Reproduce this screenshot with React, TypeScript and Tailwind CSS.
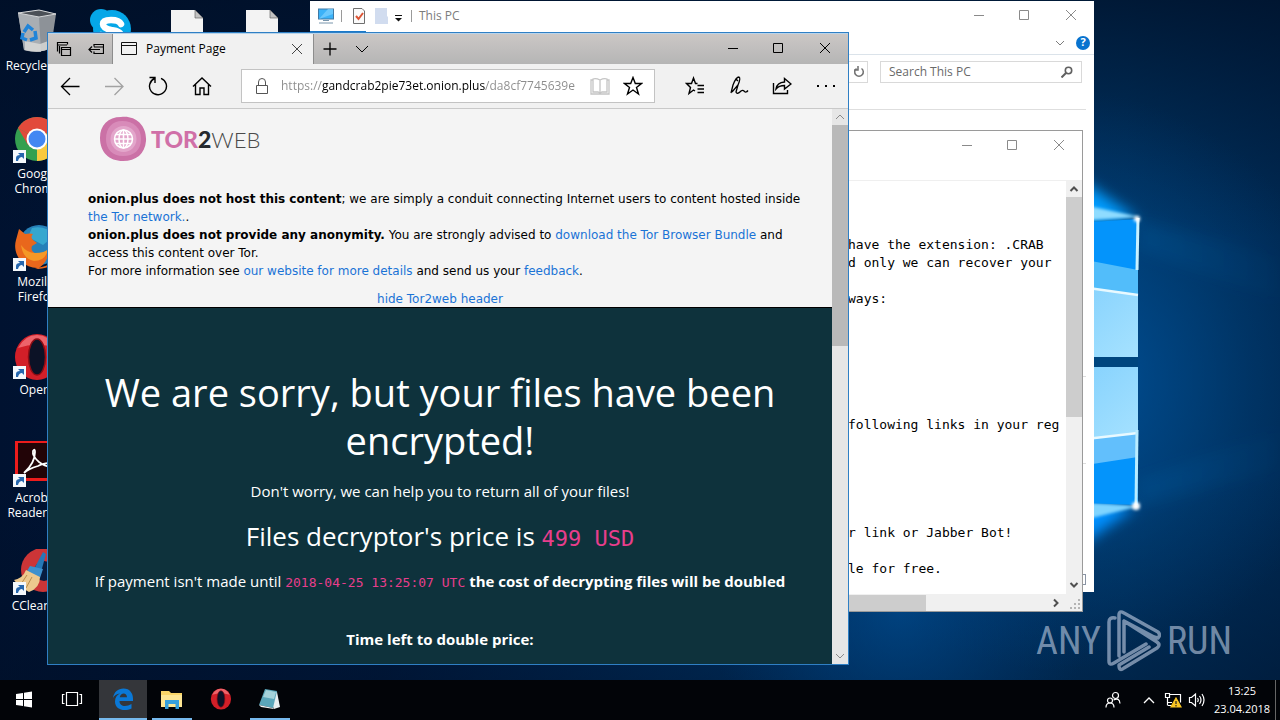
import type { ReactNode } from "react";

const NOTE = [
  "",
  "",
  "",
  "have the extension: .CRAB",
  "d only we can recover your",
  "",
  "ways:",
  "",
  "",
  "",
  "",
  "",
  "",
  "following links in your reg",
  "",
  "",
  "",
  "",
  "",
  "r link or Jabber Bot!",
  "",
  "le for free.",
].join("\n");

function Wallpaper() {
  return (
    <svg className="absolute inset-0 h-full w-full" viewBox="0 0 1280 680" preserveAspectRatio="xMaxYMid slice" aria-hidden="true">
      <defs>
        <linearGradient id="wbase" x1="0" y1="0" x2="1" y2="0">
          <stop offset="0" stopColor="#001230" />
          <stop offset="0.3" stopColor="#001a40" />
          <stop offset="0.65" stopColor="#003c74" />
          <stop offset="0.88" stopColor="#003768" />
          <stop offset="1" stopColor="#002a54" />
        </linearGradient>
        <radialGradient id="wglow" gradientUnits="userSpaceOnUse" cx="1060" cy="380" r="290">
          <stop offset="0" stopColor="#0058a6" />
          <stop offset="0.3" stopColor="#004c90" stopOpacity="0.7" />
          <stop offset="0.65" stopColor="#004684" stopOpacity="0.3" />
          <stop offset="1" stopColor="#004080" stopOpacity="0" />
        </radialGradient>
        <radialGradient id="wfloor" gradientUnits="userSpaceOnUse" cx="900" cy="610" r="190">
          <stop offset="0" stopColor="#005098" stopOpacity="0.6" />
          <stop offset="1" stopColor="#004080" stopOpacity="0" />
        </radialGradient>
        <linearGradient id="wtop" x1="0" y1="0" x2="0" y2="1">
          <stop offset="0" stopColor="#000f26" stopOpacity="0.75" />
          <stop offset="0.35" stopColor="#000f26" stopOpacity="0" />
          <stop offset="0.7" stopColor="#000f26" stopOpacity="0" />
          <stop offset="1" stopColor="#000f26" stopOpacity="0.45" />
        </linearGradient>
        <linearGradient id="wpane" x1="0" y1="0" x2="1" y2="1">
          <stop offset="0" stopColor="#80cffd" />
          <stop offset="1" stopColor="#a6e2ff" />
        </linearGradient>
        <linearGradient id="wray" gradientUnits="userSpaceOnUse" x1="1138" y1="0" x2="1280" y2="0">
          <stop offset="0" stopColor="#1477c8" stopOpacity="0.16" />
          <stop offset="1" stopColor="#1477c8" stopOpacity="0.02" />
        </linearGradient>
        <filter id="wsoft" x="-50%" y="-50%" width="200%" height="200%">
          <feGaussianBlur stdDeviation="7" />
        </filter>
        <filter id="wfine" x="-50%" y="-50%" width="200%" height="200%">
          <feGaussianBlur stdDeviation="1.5" />
        </filter>
      </defs>
      <rect width="1280" height="680" fill="url(#wbase)" />
      <rect width="1280" height="680" fill="url(#wtop)" />
      <rect width="1280" height="680" fill="url(#wglow)" />
      <rect width="1280" height="680" fill="url(#wfloor)" />
      <path d="M1138 219L1280 258V300L1138 250Z" fill="url(#wray)" filter="url(#wsoft)" />
      <path d="M1138 506L1280 470V430L1138 480Z" fill="url(#wray)" filter="url(#wsoft)" />
      <path d="M1060 165L1138 219L1060 230Z" fill="#009cff" filter="url(#wsoft)" />
      <path d="M1060 495L1136 507L1060 560Z" fill="#0090ff" filter="url(#wsoft)" />
      <path d="M1060 200L1140 217L1060 222Z" fill="#8fdcff" filter="url(#wfine)" />
      <path d="M1060 501L1140 506L1060 526Z" fill="#7fd4ff" filter="url(#wfine)" />
      <path d="M1060 224L1138 219V357H1060Z" fill="#0494fb" />
      <path d="M1060 255L1138 270V357H1060Z" fill="#52bdfa" />
      <path d="M1060 284L1138 295V357H1060Z" fill="url(#wpane)" />
      <path d="M1060 284L1138 295" stroke="#e8f9ff" strokeWidth="2.5" />
      <path d="M1138 218L1137 270" stroke="#c9f1ff" strokeWidth="3" />
      <path d="M1060 367H1138V505L1060 502Z" fill="#0494fb" />
      <path d="M1060 367H1138V457L1060 469Z" fill="#62bffc" />
      <path d="M1060 367H1138V433L1060 441Z" fill="url(#wpane)" />
      <path d="M1060 442L1138 433" stroke="#e8f9ff" strokeWidth="2.5" />
      <path d="M1137 430L1136 505" stroke="#b9ecff" strokeWidth="3" />
      <rect x="1060" y="357" width="78" height="10" fill="#00467f" />
      <circle cx="1137" cy="219" r="3" fill="#fff" filter="url(#wfine)" />
      <circle cx="1136" cy="506" r="4" fill="#fff" filter="url(#wfine)" />
    </svg>
  );
}

function Shortcut() {
  return (
    <g>
      <rect x="0" y="33" width="13" height="13" fill="#f4f8fc" />
      <path d="M3 44V41Q3 38 7 38L5 36H11V42L9 40Q6 40 5 44Z" fill="#2566ad" />
    </g>
  );
}

function DesktopItem({ label, children }: { label: string; children: ReactNode }) {
  return (
    <a href="#" className="flex h-[108px] w-[74px] flex-col items-center text-center text-[12px] leading-[15px] text-white">
      <svg className="h-12 w-12 shrink-0" viewBox="0 0 48 48" aria-hidden="true">
        {children}
      </svg>
      <span className="mt-px w-full">{label}</span>
    </a>
  );
}

function OperaShape() {
  return (
    <g>
      <ellipse cx="24" cy="24" rx="22" ry="23" fill="#d21f28" />
      <path d="M5 15Q12 2 24 2Q36 2 43 15Q24 8 5 15Z" fill="#f4747a" opacity="0.8" />
      <ellipse cx="24" cy="24" rx="8.5" ry="18" fill="#0c1226" stroke="#8e0d14" strokeWidth="1.5" />
    </g>
  );
}

function DesktopIcons() {
  return (
    <div className="absolute top-[9px] left-0 flex">
      <div className="flex flex-col">
        <DesktopItem label="Recycle Bin">
          <path d="M5 4L26 1L43 5L38 39Q28 45 11 41Z" fill="#8d9298" />
          <path d="M5 4L26 8L28 43Q18 43 11 41Z" fill="#a9aeb3" />
          <path d="M5 4L26 1L43 5L26 8Z" fill="#4b5057" stroke="#d4d6d8" />
          <path d="M12 32L27 35L38 31L37 39Q28 45 12 41Z" fill="#dcdcda" opacity="0.8" />
          <path d="M11 23L15 17L20 21M22 22L23 29L17 31M14 31L9 29L10 24" fill="none" stroke="#2084d8" strokeWidth="3.5" />
        </DesktopItem>
        <DesktopItem label="Google Chrome">
          <circle cx="24" cy="22" r="22" fill="#34a050" />
          <path d="M24 22L5 11A22 22 0 0 1 43 11Z" fill="#e24a3b" />
          <path d="M24 22L43 11A22 22 0 0 1 24 44Z" fill="#f9ca3e" />
          <path d="M5 11L15 28L24 22Z" fill="#e24a3b" />
          <circle cx="24" cy="22" r="10.5" fill="#fff" />
          <circle cx="24" cy="22" r="8.5" fill="#4387f2" />
          <Shortcut />
        </DesktopItem>
        <DesktopItem label="Mozilla Firefox">
          <circle cx="26" cy="20" r="20" fill="#2680b8" />
          <path d="M19 3Q32 0 42 10L30 20L15 12Z" fill="#36a7cf" />
          <path d="M6 4L12 9Q17 8 20 9Q17 12 20 15L24 18L19 21Q17 27 24 29Q32 29 36 23Q36 36 26 43A22 22 0 0 1 3 15Z" fill="#e9671c" />
          <path d="M22 28Q32 28 35 24Q33 36 21 36Q10 34 8 20Q14 28 22 28Z" fill="#f49826" />
          <path d="M22 43Q44 42 46 20Q47 43 25 44Z" fill="#e9671c" />
          <Shortcut />
        </DesktopItem>
        <DesktopItem label="Opera">
          <OperaShape />
          <Shortcut />
        </DesktopItem>
        <DesktopItem label="Acrobat Reader DC">
          <rect x="3.5" y="0.5" width="42" height="38" fill="#220407" stroke="#ed1c1c" strokeWidth="3" />
          <path d="M11 32Q22 22 22 11Q22 7 20 10Q19 15 26 21Q36 28 39 24Q36 20 25 25Q15 28 11 32Z" fill="none" stroke="#fff" strokeWidth="1.8" />
          <Shortcut />
        </DesktopItem>
        <DesktopItem label="CCleaner">
          <circle cx="30" cy="21" r="22" fill="#cc3537" />
          <circle cx="31" cy="22" r="10" fill="#081c40" />
          <path d="M30 3L33 5L28 23L21 20Z" fill="#2678b8" />
          <path d="M17 17L30 20L27 29L14 22Z" fill="#3d91ce" />
          <path d="M13 21L27 28Q27 39 16 43Q6 38 1 31Q10 29 13 21Z" fill="#edc98e" />
          <path d="M14 26L8 35M19 28L13 39" stroke="#b98c4c" />
          <Shortcut />
        </DesktopItem>
      </div>
      <div className="flex">
        <svg className="h-12 w-[75px]" viewBox="0 0 75 48" aria-label="Skype">
          <circle cx="38" cy="20" r="19" fill="#05a7e8" />
          <circle cx="27" cy="11" r="11" fill="#05a7e8" />
          <path d="M47 15Q45 11 37 11Q29 11 29 15Q29 19 37 21Q47 22 47 27Q46 32 37 32Q28 31 27 26" fill="none" stroke="#fff" strokeWidth="6.5" strokeLinecap="round" />
        </svg>
        <svg className="h-12 w-[75px]" viewBox="0 0 75 48" aria-label="Document">
          <path d="M22 1H46L54 9V44H22Z" fill="#f3f3f3" />
          <path d="M46 1L54 9H46Z" fill="#c2c2c2" stroke="#555" strokeWidth="0.6" />
        </svg>
        <svg className="h-12 w-[75px]" viewBox="0 0 75 48" aria-label="Document">
          <path d="M22 1H46L54 9V44H22Z" fill="#f3f3f3" />
          <path d="M46 1L54 9H46Z" fill="#c2c2c2" stroke="#555" strokeWidth="0.6" />
        </svg>
      </div>
    </div>
  );
}

function Glyph({ d, label, className, size = 16, w = 1 }: { d: string; label: string; className: string; size?: number; w?: number }) {
  return (
    <button type="button" aria-label={label} className={`flex shrink-0 items-center justify-center ${className}`}>
      <svg width={size} height={size} viewBox={`0 0 ${size} ${size}`} fill="none" stroke="currentColor" strokeWidth={w} aria-hidden="true">
        <path d={d} />
      </svg>
    </button>
  );
}

function Caption({ className }: { className: string }) {
  return (
    <div className={`flex ${className}`}>
      <Glyph label="Minimize" className="w-[46px]" size={12} d="M1 5.5H11" />
      <Glyph label="Maximize" className="w-[46px]" size={12} d="M0.5 0.5H9.5V9.5H0.5Z" />
      <Glyph label="Close" className="w-[46px]" size={12} d="M1 0L11 10M11 0L1 10" />
    </div>
  );
}

function ExplorerWindow() {
  return (
    <section aria-label="This PC" className="absolute top-px left-[310px] flex h-[591px] w-[784px] flex-col bg-white text-[12px] text-[#7c7c7c]">
      <div className="flex h-[30px] items-center">
        <svg className="ml-2 h-4 w-4" viewBox="0 0 16 16" aria-hidden="true">
          <rect x="0.5" y="1" width="15" height="10" fill="#3bb2f8" stroke="#407aa5" />
          <path d="M1 11L10 1H15V6Z" fill="#7fd2ff" opacity="0.7" />
          <path d="M5 12.5H11M1 15H15" stroke="#7895ac" />
        </svg>
        <span className="ml-[7px] h-3 w-px bg-[#9a9a9a]" />
        <svg className="ml-[9px] h-4 w-4" viewBox="0 0 16 16" aria-hidden="true">
          <path d="M2.5 0.5H11L13.5 3V15.5H2.5Z" fill="#fafafa" stroke="#6f6f6f" />
          <path d="M5 8L7.5 11L12 5" fill="none" stroke="#dc5434" strokeWidth="2" />
        </svg>
        <svg className="ml-2 h-4 w-4" viewBox="0 0 16 16" aria-hidden="true">
          <path d="M0 0H12V8L13 9V16H0Z" fill="#d1dcef" />
        </svg>
        <svg className="ml-px h-4 w-3" viewBox="0 0 12 16" aria-hidden="true">
          <path d="M3 7.5H10" stroke="#111" />
          <path d="M3 10H10L6.5 13.5Z" fill="#111" />
        </svg>
        <span className="mx-[7px] h-3 w-px bg-[#9a9a9a]" />
        <span className="flex-1">This PC</span>
        <Caption className="h-full text-[#8a8a8a]" />
      </div>
      <div className="flex h-6 items-center justify-between border-b border-[#dbe3ea]">
        <button type="button" className="h-full w-14 bg-[#1979ca] text-white">File</button>
        <div className="flex items-center gap-2 pr-1">
          <Glyph label="Expand ribbon" className="w-4" size={10} d="M1 3L5 7L9 3" />
          <button type="button" aria-label="Help" className="flex h-[14px] w-[14px] items-center justify-center rounded-full bg-[#0873cf] text-[11px] font-bold text-white">?</button>
        </div>
      </div>
      <div className="mr-2 flex h-[55px] items-start justify-end border-b border-[#dedede] pt-[6px] pr-1">
        <div className="flex h-[22px] w-[300px] justify-end border border-[#d9d9d9]">
          <Glyph label="Refresh" className="w-4 text-[#707070]" size={12} w={1.5} d="M8.5 2.5A4.3 4.3 0 1 1 3.5 2.5M5 0V4H1" />
        </div>
        <label className="ml-3 flex h-[22px] w-[202px] items-center border border-[#d9d9d9] px-2">
          <input aria-label="Search This PC" placeholder="Search This PC" className="min-w-0 flex-1 text-[12px] outline-none placeholder:text-[#6a6a6a]" />
          <svg className="h-3 w-3" viewBox="0 0 12 12" fill="none" stroke="#606060" strokeWidth="1.6" aria-hidden="true">
            <circle cx="7.5" cy="4.5" r="3.2" />
            <path d="M5 7L0.5 11.5" strokeWidth="2" />
          </svg>
        </label>
      </div>
      <div className="flex flex-1 flex-col pr-2">
        <div className="h-[267px] border-b border-[#dcdcdc]" />
        <div className="h-[87px] border-b border-[#dcdcdc]" />
        <div className="mt-[110px] h-[11px] w-3 self-end border border-[#8a94a4]" />
      </div>
    </section>
  );
}

function NotepadWindow() {
  return (
    <section aria-label="Notepad" className="absolute top-[130px] left-[640px] flex h-[482px] w-[443px] flex-col border border-[#9a9a9a] bg-white">
      <Caption className="h-[30px] justify-end text-[#8a8a8a]" />
      <div className="h-5 border-b border-[#efefef]" />
      <div className="flex min-h-0 flex-1">
        <textarea
          readOnly
          aria-label="Note text"
          wrap="off"
          defaultValue={NOTE}
          className="min-w-0 flex-1 resize-none overflow-hidden bg-white pt-px pl-[207px] font-['DejaVu_Sans_Mono',monospace] text-[13px] leading-[18px] text-black outline-none"
        />
        <div className="flex w-4 flex-col bg-[#f0f0f0] text-[#505050]">
          <Glyph label="Scroll up" className="h-4" size={10} w={2} d="M1.500 7L5 3.500L8.500 7" />
          <div className="h-[220px] bg-[#cdcdcd]" />
          <div className="flex-1" />
          <Glyph label="Scroll down" className="h-[18px]" size={10} w={2} d="M1.500 3L5 6.500L8.500 3" />
        </div>
      </div>
      <div className="flex h-[17px] items-center bg-[#f0f0f0] text-[#505050]">
        <div className="h-4 w-[285px] bg-[#cdcdcd]" />
        <div className="flex-1" />
        <Glyph label="Scroll right" className="w-4" size={10} w={2} d="M3 1.500L6.500 5L3 8.500" />
        <svg className="ml-0.5 h-4 w-4" viewBox="0 0 16 16" fill="#b4b4b4" aria-hidden="true">
          <path d="M12 4h2v2h-2zM12 8h2v2h-2zM8 8h2v2h-2zM12 12h2v2h-2zM8 12h2v2h-2zM4 12h2v2h-2z" />
        </svg>
      </div>
    </section>
  );
}

function Tor2WebLogo() {
  return (
    <div className="flex h-[46px] items-center gap-1">
      <svg className="h-[46px] w-[47px]" viewBox="0 0 47 46" aria-hidden="true">
        <path d="M21 1C35 -1 47 9 46 25C45 38 36 45 23 45C9 45 0 36 0 22C0 9 8 1 21 1Z" fill="#cb71a6" />
        <path d="M22 5C34 5 41 12 41 23C41 34 34 40 23 40C12 40 6 33 6 23C6 12 12 5 22 5Z" fill="#d88bb9" />
        <circle cx="23.500" cy="23" r="13" fill="#e3a6cb" />
        <g fill="none" stroke="#fff" strokeWidth="1.5">
          <circle cx="23.500" cy="23" r="9" />
          <ellipse cx="23.500" cy="23" rx="4.500" ry="9" />
          <path d="M14.500 23H32.500M23.500 14V32M16 18.500H31M16 27.500H31" />
        </g>
      </svg>
      <span className="font-['Lato',sans-serif] text-[23px] leading-none">
        <b className="font-black text-[#d070a8]">TOR</b>
        <b className="font-black text-[#26292e]">2</b>
        <span className="text-[22px] font-light text-[#4a4a4a]">WEB</span>
      </span>
    </div>
  );
}

function Link({ children }: { children: ReactNode }) {
  return (
    <a href="#" className="text-[#1a73d6]">
      {children}
    </a>
  );
}

function PageContent() {
  return (
    <main className="min-w-0 flex-1 overflow-hidden bg-[#0e323c]">
      <header className="border-b border-black bg-[#f4f4f4] px-10 pt-[7px] font-['DejaVu_Sans',sans-serif] text-[12px] leading-[18px] text-black">
        <div className="pl-3">
          <Tor2WebLogo />
        </div>
        <p className="mt-7 whitespace-nowrap">
          <b>onion.plus does not host this content</b>; we are simply a conduit connecting Internet users to content hosted inside
          <br />
          <Link>the Tor network.</Link>.<br />
          <b>onion.plus does not provide any anonymity.</b> You are strongly advised to <Link>download the Tor Browser Bundle</Link> and
          <br />
          access this content over Tor.
          <br />
          For more information see <Link>our website for more details</Link> and send us your <Link>feedback</Link>.
        </p>
        <p className="mt-[10px] -mb-px text-center">
          <Link>hide Tor2web header</Link>
        </p>
      </header>
      <div className="pt-[60px] text-center text-[15px] leading-6 whitespace-nowrap text-white">
        <h1 className="text-[38px] leading-[48px]">
          We are sorry, but your files have been
          <br />
          encrypted!
        </h1>
        <p className="mt-[15px]">Don't worry, we can help you to return all of your files!</p>
        <h2 className="mt-4 text-[26px] leading-[34px]">
          Files decryptor's price is <code className="font-['DejaVu_Sans_Mono',monospace] text-[22px] leading-none text-[#e83e8c]">499 USD</code>
        </h2>
        <p className="mt-4">
          If payment isn't made until{" "}
          <code className="font-['DejaVu_Sans_Mono',monospace] text-[13px] leading-none text-[#e83e8c]">2018-04-25 13:25:07 UTC</code>{" "}
          <b>the cost of decrypting files will be doubled</b>
        </p>
        <p className="mt-[34px]">
          <b>Time left to double price:</b>
        </p>
      </div>
    </main>
  );
}

function EdgeWindow() {
  return (
    <section aria-label="Payment Page" className="absolute top-8 left-[47px] flex h-[633px] w-[802px] flex-col border border-[#2f7fc4] bg-[#f1f1f1] text-black">
      <div className="flex h-[31px] border-t border-[#b9d4ea] bg-linear-to-b from-[#cbc7c5] to-[#b5b5b5]">
        <Glyph label="Tabs you've set aside" className="w-8" w={1.2} d="M1.500 10.500V1.500H11.500V3.500M1.500 4H11M3.500 12.500V5M5.500 6.500H14.500V14.500H5.500ZM5.500 8.500H14.500" />
        <Glyph label="Set these tabs aside" className="w-8" w={1.2} d="M6 5.500V3.500H15.500V12.500H6V10.500M6 6H15.500M12 8.500H1M4 5.500L1 8.500L4 11.500" />
        <div className="flex w-[202px] items-center border-x border-[#8d8d8d] bg-[#f1f1f1] pl-2">
          <svg className="h-4 w-4" viewBox="0 0 16 16" fill="none" stroke="#111" aria-hidden="true">
            <path d="M0.500 1.500H15.500V13.500H0.500ZM0.500 4.500H15.500" />
          </svg>
          <span className="ml-[9px] flex-1 text-[12px]">Payment Page</span>
          <Glyph label="Close tab" className="w-8 text-[#444]" size={12} d="M1 1L11 11M11 1L1 11" />
        </div>
        <Glyph label="New tab" className="w-8" d="M8 1.500V14.500M1.500 8H14.500" w={1.3} />
        <Glyph label="Tab previews" className="w-8" d="M2 5L8 11L14 5" />
        <div className="flex-1" />
        <Caption className="h-full" />
      </div>
      <div className="flex h-[45px] items-center border-b border-[#c9c9c9]">
        <Glyph label="Back" className="w-11" size={20} w={1.3} d="M19.500 10.500H2M10 2L1.500 10.500L10 19" />
        <Glyph label="Forward" className="w-11 text-[#a2a2a2]" size={20} w={1.3} d="M1 10.500H18M10.500 2L19 10.500L10.500 19" />
        <Glyph label="Refresh" className="w-11" size={20} w={1.4} d="M6.500 2.500A8.500 8.500 0 1 0 13 2.300M1.500 1.500H7V7" />
        <Glyph label="Home" className="w-11" size={20} w={1.4} d="M1 10.500L10 2L19 10.500M3.500 8.500V18.500H8V12H12V18.500H16.500V8.500" />
        <div className="ml-[17px] flex h-[34px] w-[414px] items-center border border-[#c3c3c3] bg-white">
          <svg className="mr-[11px] ml-3 h-4 w-4 shrink-0" viewBox="0 0 16 16" fill="none" stroke="#555" aria-hidden="true">
            <path d="M2.500 7.500H13.500V15.500H2.500ZM4.500 7.500V4A3.500 3.500 0 0 1 11.500 4V7.500" />
          </svg>
          <input
            aria-label="Address"
            defaultValue="https://gandcrab2pie73et.onion.plus/da8cf7745639e"
            className="min-w-0 flex-1 bg-[linear-gradient(90deg,#8c8c8c_41px,#000_41px,#000_204px,#8c8c8c_204px)] bg-clip-text text-[12px] text-transparent outline-none"
          />
          <Glyph label="Reading view" className="w-6 text-[#c4c4c4]" size={20} w={1.3} d="M10 4V17M10 4Q6 2 3 3V16H8L10 17L12 16H17V3Q14 2 10 4M3 4H1V18H19V4H17" />
          <Glyph label="Add to favorites" className="w-[42px]" size={20} w={1.4} d="M10 1.500L12.300 7.500H18.500L13.500 11.500L15.500 18L10 14L4.500 18L6.500 11.500L1.500 7.500H7.700Z" />
        </div>
        <div className="flex flex-1 justify-end">
          <Glyph label="Favorites" className="w-11" size={20} w={1.4} d="M19 9.500H12.500M19 13H12.500M19 16.500H12.500M12.500 7.500H10.500L8.500 2L6.500 7.500H1.500L5.500 11.500L4 17.500L8.500 14L10 15" />
          <Glyph label="Make a web note" className="w-[43px]" size={20} w={1.3} d="M2 17L4 9Q7 1 10 1Q12 2 9 9L3 16M7 3L9 5M9 9L7 16Q8 19 12 15Q14 13.500 15.500 15.500Q17 17 19 14.500" />
          <Glyph label="Share" className="w-11" size={20} w={1.4} d="M1.500 7V17.500H15.500V14M4 13Q5 6.500 12.500 6V2.500L19 8L12.500 13V9.500Q7 9.500 4 13Z" />
          <button type="button" aria-label="More" className="flex w-11 items-center justify-center gap-[6px]">
            <span className="h-[2px] w-[2px] bg-black" />
            <span className="h-[2px] w-[2px] bg-black" />
            <span className="h-[2px] w-[2px] bg-black" />
          </button>
        </div>
      </div>
      <div className="flex min-h-0 flex-1">
        <PageContent />
        <div className="flex w-4 flex-col bg-[#e6e6e6] text-[#8a8a8a]">
          <Glyph label="Scroll page up" className="h-4" size={10} d="M1 7L5 3L9 7" />
          <div className="h-[221px] bg-[#b9b9b9]" />
          <div className="flex-1" />
          <Glyph label="Scroll page down" className="h-4" size={10} d="M1 3L5 7L9 3" />
        </div>
      </div>
    </section>
  );
}

function Watermark() {
  return (
    <div className="absolute right-12 bottom-2 flex items-center gap-[6px] font-['Liberation_Sans_Narrow','Roboto_Condensed',sans-serif] text-[38px] leading-[62px] text-[#b4c3da]/65">
      <span>ANY</span>
      <svg className="h-[62px] w-[54px]" viewBox="0 0 54 62" fill="none" stroke="currentColor" strokeWidth="3.500" strokeLinejoin="round" strokeLinecap="round" aria-hidden="true">
        <path d="M8 8Q2 7 2 12V51Q2 56 7 53L39 34M12 46V5Q12 0 17 3L51 22Q54 25 51 28L47 27L17 11M17 12V42M17 11L50 32Q54 35 50 38L17 58Q12 62 12 55L42 37" />
      </svg>
      <span>RUN</span>
    </div>
  );
}

function TaskButton({ label, width, active, open, children }: { label: string; width: string; active?: boolean; open?: boolean; children: ReactNode }) {
  return (
    <button
      type="button"
      aria-label={label}
      className={`flex h-full items-center justify-center ${width} ${active ? "bg-[#34363a]" : ""} ${open ? "border-b-2 border-[#76b9ed]" : "border-b-2 border-transparent"}`}
    >
      <svg className="h-6 w-6" viewBox="0 0 24 24" fill="none" aria-hidden="true">
        {children}
      </svg>
    </button>
  );
}

function Taskbar() {
  return (
    <footer className="relative flex h-10 shrink-0 items-center bg-[#020408] text-white">
      <TaskButton label="Start" width="w-12">
        <path d="M4 7L11 6V12H4ZM12 5.800L20 4.600V12H12ZM4 13H11V19L4 18ZM12 13H20V20.400L12 19.200Z" fill="#fff" />
      </TaskButton>
      <TaskButton label="Task View" width="w-12">
        <path d="M6.500 5.500H17.500V18.500H6.500ZM4.500 7.500H2.500V16.500H4.500M19.500 7.500H21.500V16.500H19.500" stroke="#fff" strokeWidth="1.200" />
      </TaskButton>
      <div className="ml-[3px] flex h-full gap-[5px]">
        <TaskButton label="Microsoft Edge" width="w-12" active open>
          <path d="M2 11C3 5 7 1.500 12.500 1.500C19 1.500 22 6.500 22 11.500V14H8.500C8.500 20 15.500 20 20.500 17V21.500C13 25 4 22.500 4 14.500C4 10.500 6 8 9 6.500C5.500 6.800 3.300 8.500 2 11ZM8.700 10.300H16C16 5 9.500 5.200 8.700 10.300Z" fill="#0a78d6" fillRule="evenodd" />
        </TaskButton>
        <TaskButton label="File Explorer" width="w-10" open>
          <path d="M1 4H9L11 6H22V20H1Z" fill="#f9d568" />
          <path d="M1 8H22V20H1Z" fill="#fde694" />
          <path d="M5 13H19V22H15.500V17H8.500V22H5Z" fill="#36a0dc" />
        </TaskButton>
      </div>
      <div className="ml-[9px] flex h-full gap-[9px]">
        <TaskButton label="Opera" width="w-10">
          <g transform="scale(0.46) translate(2 2)">
            <OperaShape />
          </g>
        </TaskButton>
        <TaskButton label="Notepad" width="w-10" open>
          <path d="M7 3L19 5L22 20L16 22Z" fill="#e8eef0" />
          <path d="M7 2L19 4L15 21L1 18Z" fill="#5aa6ba" />
          <path d="M8 3L18 5L16 12L5 10Z" fill="#a4d2da" />
          <path d="M1 18L15 21L16 22L3 20Z" fill="#f4f4f4" />
        </TaskButton>
      </div>
      <div className="flex-1" />
      <button type="button" aria-label="People" className="flex w-12 justify-center">
        <svg width="16" height="18" viewBox="0 0 16 18" fill="none" stroke="#fff" strokeWidth="1.200" aria-hidden="true">
          <circle cx="10.500" cy="4.500" r="3" />
          <circle cx="5" cy="9.500" r="2.500" />
          <path d="M1 16.500Q1 12 5 12Q9 12 9 16.500M8.500 9Q14.500 6 15 12.500" />
        </svg>
      </button>
      <Glyph label="Show hidden icons" className="w-6" size={14} w={1.3} d="M2 10L7 5L12 10" />
      <button type="button" aria-label="Network" className="flex w-6 justify-center">
        <svg width="18" height="18" viewBox="0 0 18 18" fill="none" stroke="#fff" strokeWidth="1.200" aria-hidden="true">
          <path d="M5 3.500H16.500V11.500M4 11.500H8M4 14.500H8M1.500 2.500H5.500V6.500H1.500ZM3.500 6.500V14.500" />
          <path d="M12 7L17 16H7Z" fill="#f9c623" stroke="#f9c623" />
          <path d="M12 10V13M12 14V15.500" stroke="#222" />
        </svg>
      </button>
      <button type="button" aria-label="Volume" className="flex w-6 justify-center">
        <svg width="18" height="18" viewBox="0 0 18 18" fill="none" stroke="#fff" strokeWidth="1.200" aria-hidden="true">
          <path d="M1.500 6.500H3.500L7.500 3V15L3.500 11.500H1.500ZM9.500 7Q11 9 9.500 11M11.500 5Q14.500 9 11.500 13M14 3Q18 9 14 15" />
        </svg>
      </button>
      <time className="w-[66px] text-center text-[11px] leading-[18px] whitespace-nowrap">
        13:25
        <br />
        23.04.2018
      </time>
      <div className="h-full w-[5px] border-l border-[#666]" />
    </footer>
  );
}

export default function App() {
  return (
    <div className="flex h-screen flex-col overflow-hidden bg-[#001230] font-['Open_Sans','Noto_Sans',sans-serif]">
      <div className="relative min-h-0 flex-1 overflow-hidden">
        <Wallpaper />
        <DesktopIcons />
        <ExplorerWindow />
        <NotepadWindow />
        <EdgeWindow />
        <Watermark />
      </div>
      <Taskbar />
    </div>
  );
}
